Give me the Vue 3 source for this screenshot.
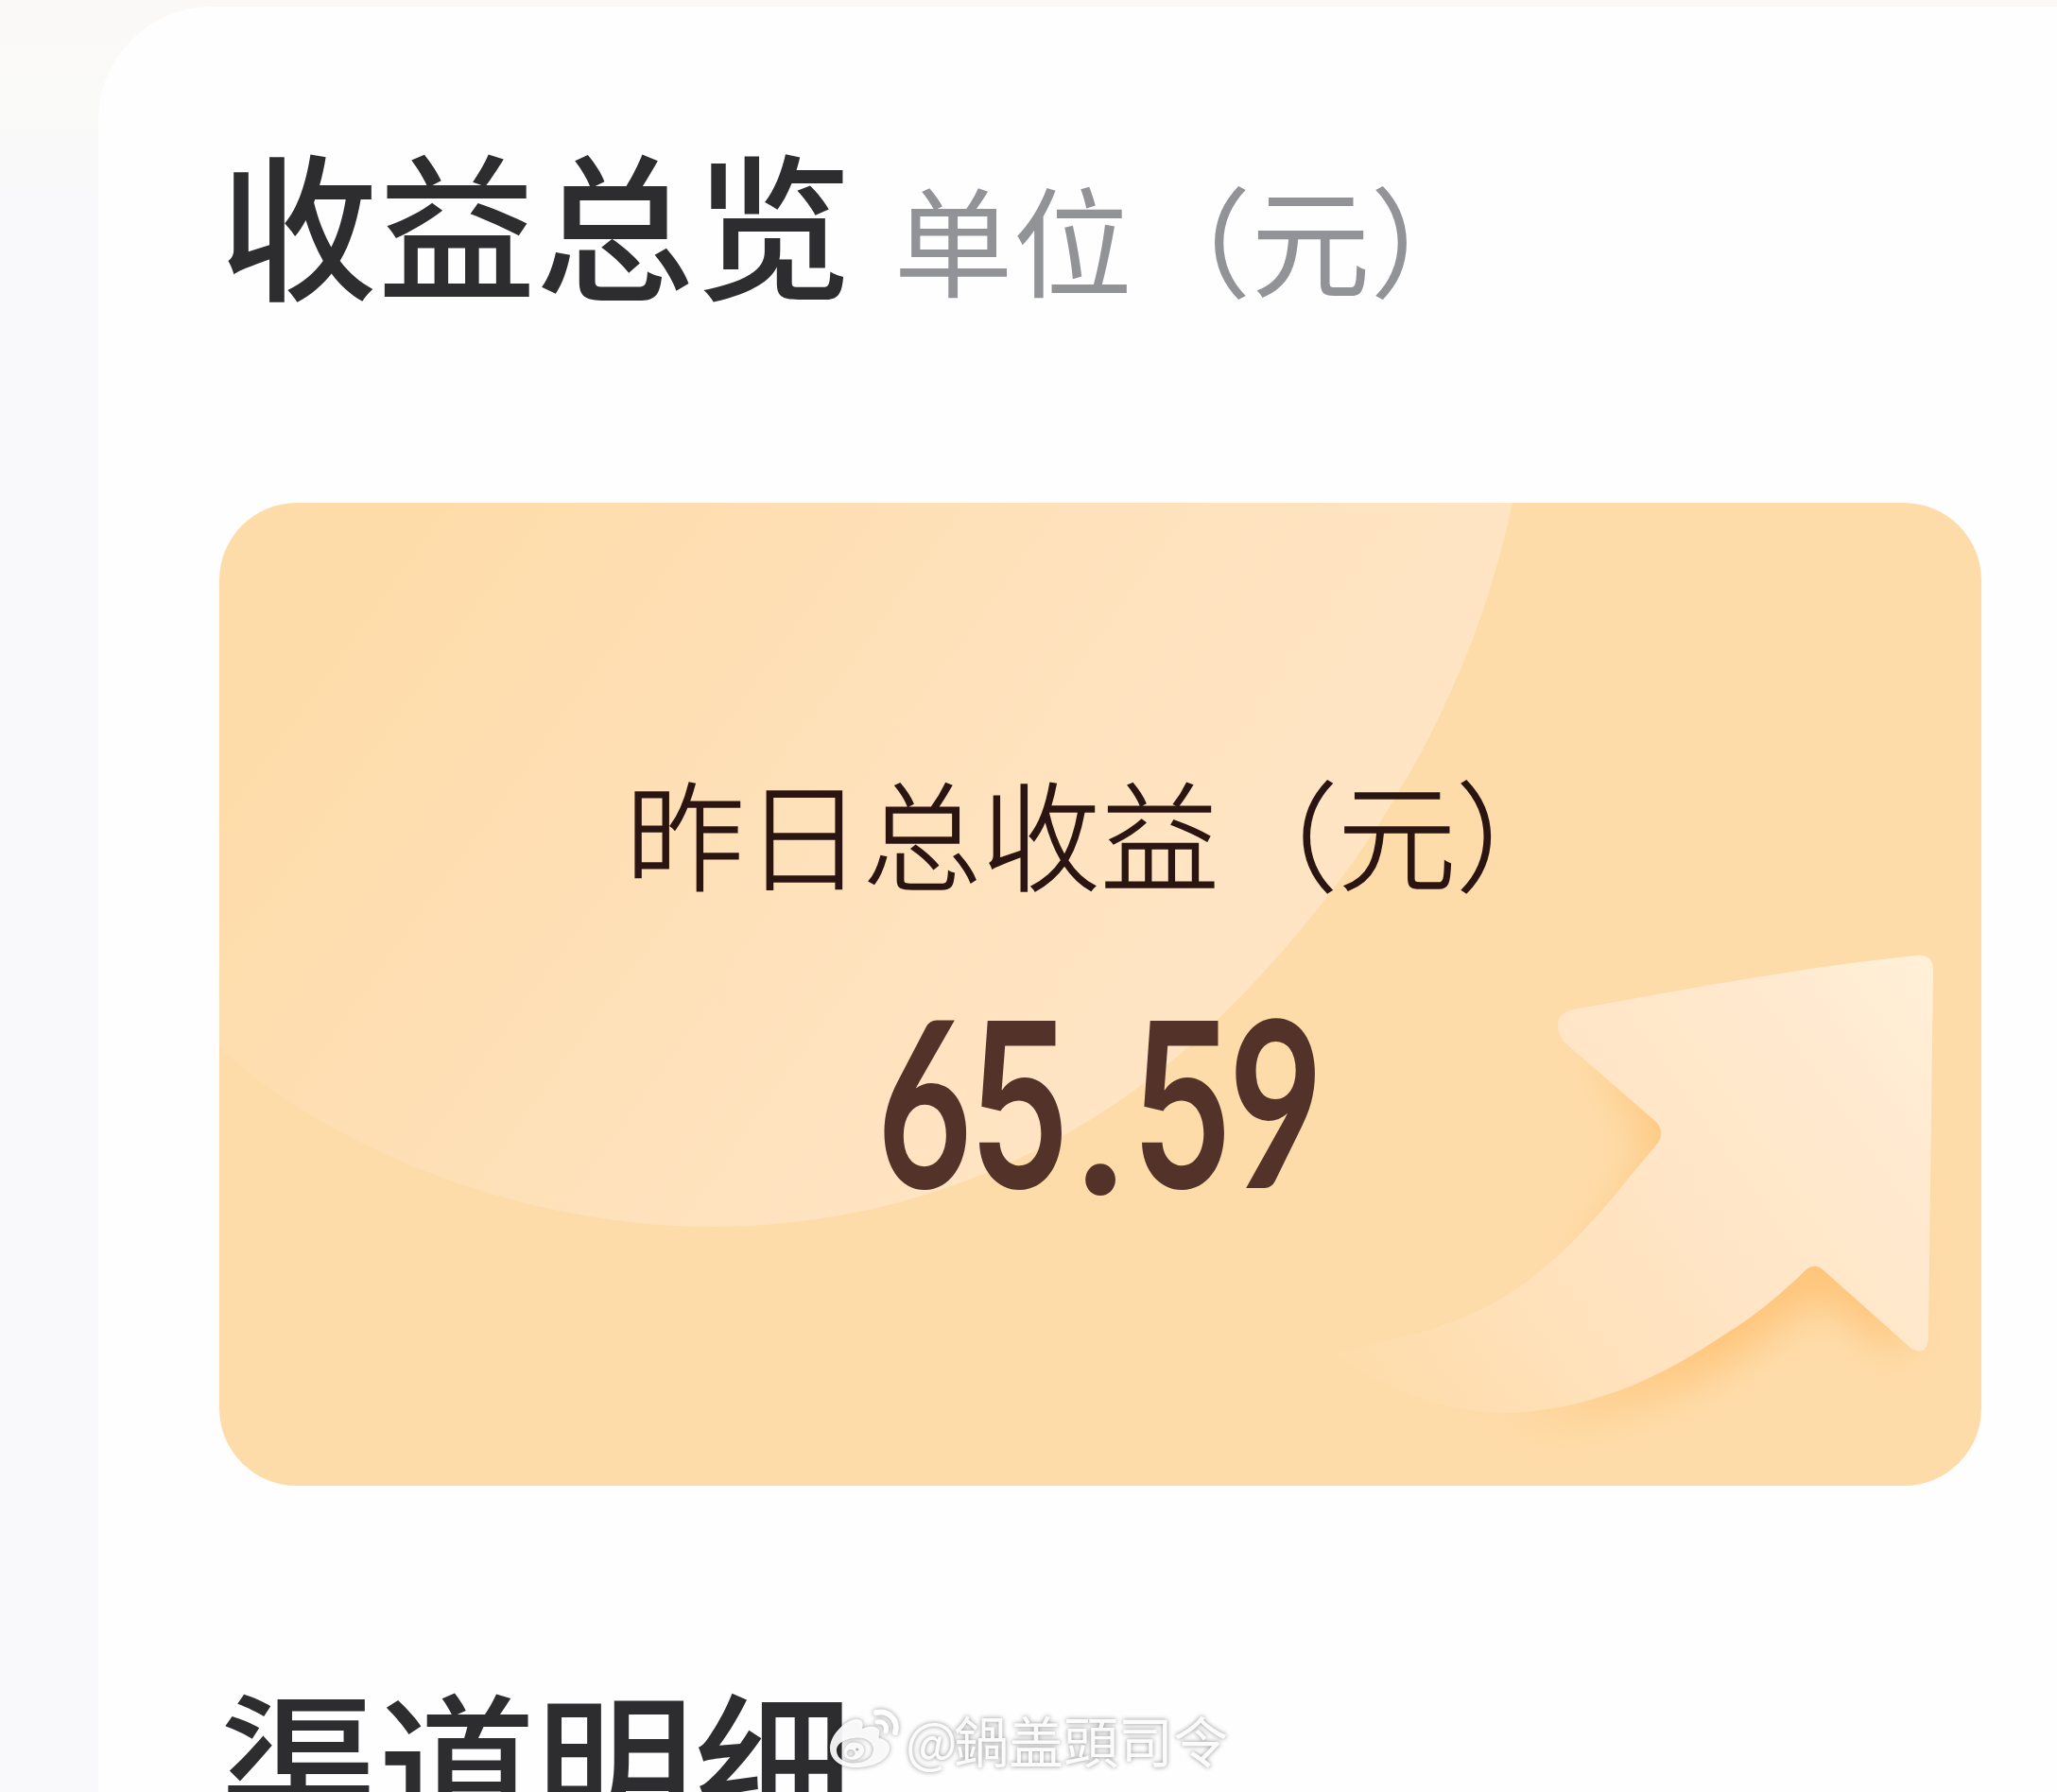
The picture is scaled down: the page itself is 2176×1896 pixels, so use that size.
<template>
  <div class="page">
    <section class="panel">
      <header class="heading">
        <h2 class="title">收益总览</h2>
        <span class="unit">单位（元）</span>
      </header>

      <div class="card">
        <svg class="card-bg" viewBox="0 0 1864 1040" fill="none" aria-hidden="true">
          <defs>
            <linearGradient id="discFill" gradientUnits="userSpaceOnUse" x1="130" y1="130" x2="870" y2="660">
              <stop offset="0" stop-color="#ffe5c8" stop-opacity="0" />
              <stop offset="1" stop-color="#ffe5c5" stop-opacity="0.95" />
            </linearGradient>
            <linearGradient id="arrowFill" gradientUnits="userSpaceOnUse" x1="1190" y1="930" x2="1810" y2="490">
              <stop offset="0" stop-color="#ffe1b8" stop-opacity="0" />
              <stop offset="0.25" stop-color="#ffe1b9" />
              <stop offset="0.5" stop-color="#ffe5c5" />
              <stop offset="0.8" stop-color="#ffe9cf" />
              <stop offset="1" stop-color="#fff0d8" />
            </linearGradient>
            <linearGradient id="arrowShade" gradientUnits="userSpaceOnUse" x1="1340" y1="0" x2="1580" y2="0">
              <stop offset="0" stop-color="#ffc57a" stop-opacity="0" />
              <stop offset="1" stop-color="#ffc57a" />
            </linearGradient>
            <filter id="soft" x="-20%" y="-20%" width="140%" height="140%">
              <feGaussianBlur stdDeviation="22" />
            </filter>
          </defs>
          <path :d="discPath" fill="url(#discFill)" />
          <path :d="shadePath" fill="url(#arrowShade)" filter="url(#soft)" />
          <path :d="arrowPath" fill="url(#arrowFill)" />
        </svg>
        <p class="label">昨日总收益（元）</p>
        <p class="amount">
          <span v-for="(ch, i) in amount" :key="i" class="digit" :class="{ five: ch === '5', dot: ch === '.' }">{{ ch }}</span>
        </p>
      </div>

      <h2 class="title">渠道明细</h2>
    </section>

    <div class="watermark">
      <svg class="weibo" viewBox="0 0 76 64" aria-hidden="true">
        <path fill-rule="evenodd" d="M2 43C1 29 17 12 30 11C36 11 38 15 36 21C45 17 55 18 54 26C54 28 53 30 54 31C61 32 66 37 65 43C63 55 47 62 29 62C14 62 3 55 2 43ZM9 45C10 54 20 59 32 57C42 56 48 50 48 42C47 34 38 29 27 31C16 32 8 38 9 45Z" />
        <path fill-rule="evenodd" d="M17 45C18 37 25 34 32 36C38 38 40 44 36 49C31 56 17 56 17 45ZM19.500 47a4.500 4 0 1 0 9 0a4.500 4 0 1 0-9 0ZM29 43a1.700 1.500 0 1 0 3.400 0a1.700 1.500 0 1 0-3.400 0Z" />
        <path class="wave" d="M51 4C64 1 75 12 71 25" />
        <path class="wave thin" d="M52 14C59 13 63 18 61 24" />
      </svg>
      <span class="name"><span class="at">@</span>鍋盖頭司令</span>
    </div>
  </div>
</template>

<script setup>
const amount = '65.59'

const discPath =
  'M-10 567C120 690 330 766 520 766C720 766 910 690 1055 548C1226 380 1332 190 1372 -20L-10 -20Z'

const arrowPath =
  'M1432 536C1560 513 1670 492 1795 479Q1813 477 1813 494L1808 882Q1807 905 1789 894L1697 812Q1688 804 1679 811' +
  'C1647 842 1622 862 1589 882C1520 929 1450 958 1366 963C1310 963 1240 945 1180 900' +
  'C1250 884 1300 872 1342 850C1400 819 1450 766 1487 719L1522 677Q1529 667 1521 656L1421 569Q1407 543 1432 536Z'

const shadePath =
  'M1450 580L1770 540L1785 905L1705 850Q1690 840 1679 848C1640 882 1600 908 1560 930' +
  'C1500 962 1430 988 1340 985L1440 790L1500 700Q1512 688 1502 672Z'
</script>

<style>
body {
  margin: 0;
  background: #f9f9fb;
}
</style>

<style scoped>
.page {
  position: relative;
  box-sizing: border-box;
  width: 2176px;
  height: 1896px;
  padding: 7px 0 0 104px;
  overflow: hidden;
  background: linear-gradient(180deg, #faf9f7 0, #fafaf7 90px, #f9f9fb 200px, #f9f9fb 100%);
  font-family: "Noto Sans CJK SC", sans-serif;
}

.panel {
  box-sizing: border-box;
  height: 1960px;
  padding: 105px 80px 0 128px;
  border-radius: 120px 0 0 0;
  background: #fefefe;
}

.heading {
  display: flex;
  align-items: baseline;
  gap: 44px;
  height: 420px;
}

.title {
  margin: 0;
  font-size: 167.4px;
  font-weight: 500;
  line-height: 240px;
  color: #2d2d30;
}

.unit {
  font-size: 126px;
  line-height: 240px;
  color: #929397;
}

.card {
  position: relative;
  box-sizing: border-box;
  width: 1864px;
  height: 1040px;
  margin-bottom: 169px;
  padding-top: 256px;
  border-radius: 82px;
  overflow: hidden;
  background: #fedcaa;
  text-align: center;
}

/* decoration lies under the figures */
.card-bg {
  position: absolute;
  inset: 0;
  width: 100%;
  height: 100%;
}

.label {
  position: relative;
  margin: 0;
  font-size: 125.5px;
  font-weight: 300;
  line-height: 180px;
  color: #2b1512;
  -webkit-text-stroke: 1.5px #2b1512;
}

.amount {
  position: relative;
  display: flex;
  justify-content: center;
  align-items: baseline;
  margin: 54px 0 0;
  font-family: Lato, sans-serif;
  font-size: 245px;
  font-weight: 700;
  line-height: 280px;
  color: #53322a;
}

/* condensed figures */
.digit {
  display: flex;
  justify-content: center;
  width: 100px;
  transform: scaleX(0.7);
}

.five {
  font-family: Inter, sans-serif;
  font-size: 243px;
  font-weight: 600;
}

.dot {
  width: 72px;
  font-size: 225px;
  transform: translateY(6px) scaleX(0.93);
}

/* weibo signature over the page */
.watermark {
  position: absolute;
  left: 876px;
  top: 1798px;
  display: flex;
  align-items: center;
  gap: 6px;
  height: 84px;
  font-size: 58px;
  line-height: 84px;
  color: rgba(255, 255, 255, 0.95);
  text-shadow: 0 0 5px rgba(0, 0, 0, 0.45);
  white-space: nowrap;
}

.at {
  margin-right: -4px;
}

.weibo {
  width: 76px;
  height: 64px;
  overflow: visible;
  fill: rgba(255, 255, 255, 0.92);
  filter: drop-shadow(0 0 2.5px rgba(0, 0, 0, 0.4));
}

.wave {
  fill: none;
  stroke: #fff;
  stroke-width: 6;
  stroke-linecap: round;
}

.thin {
  stroke-width: 5;
}
</style>
